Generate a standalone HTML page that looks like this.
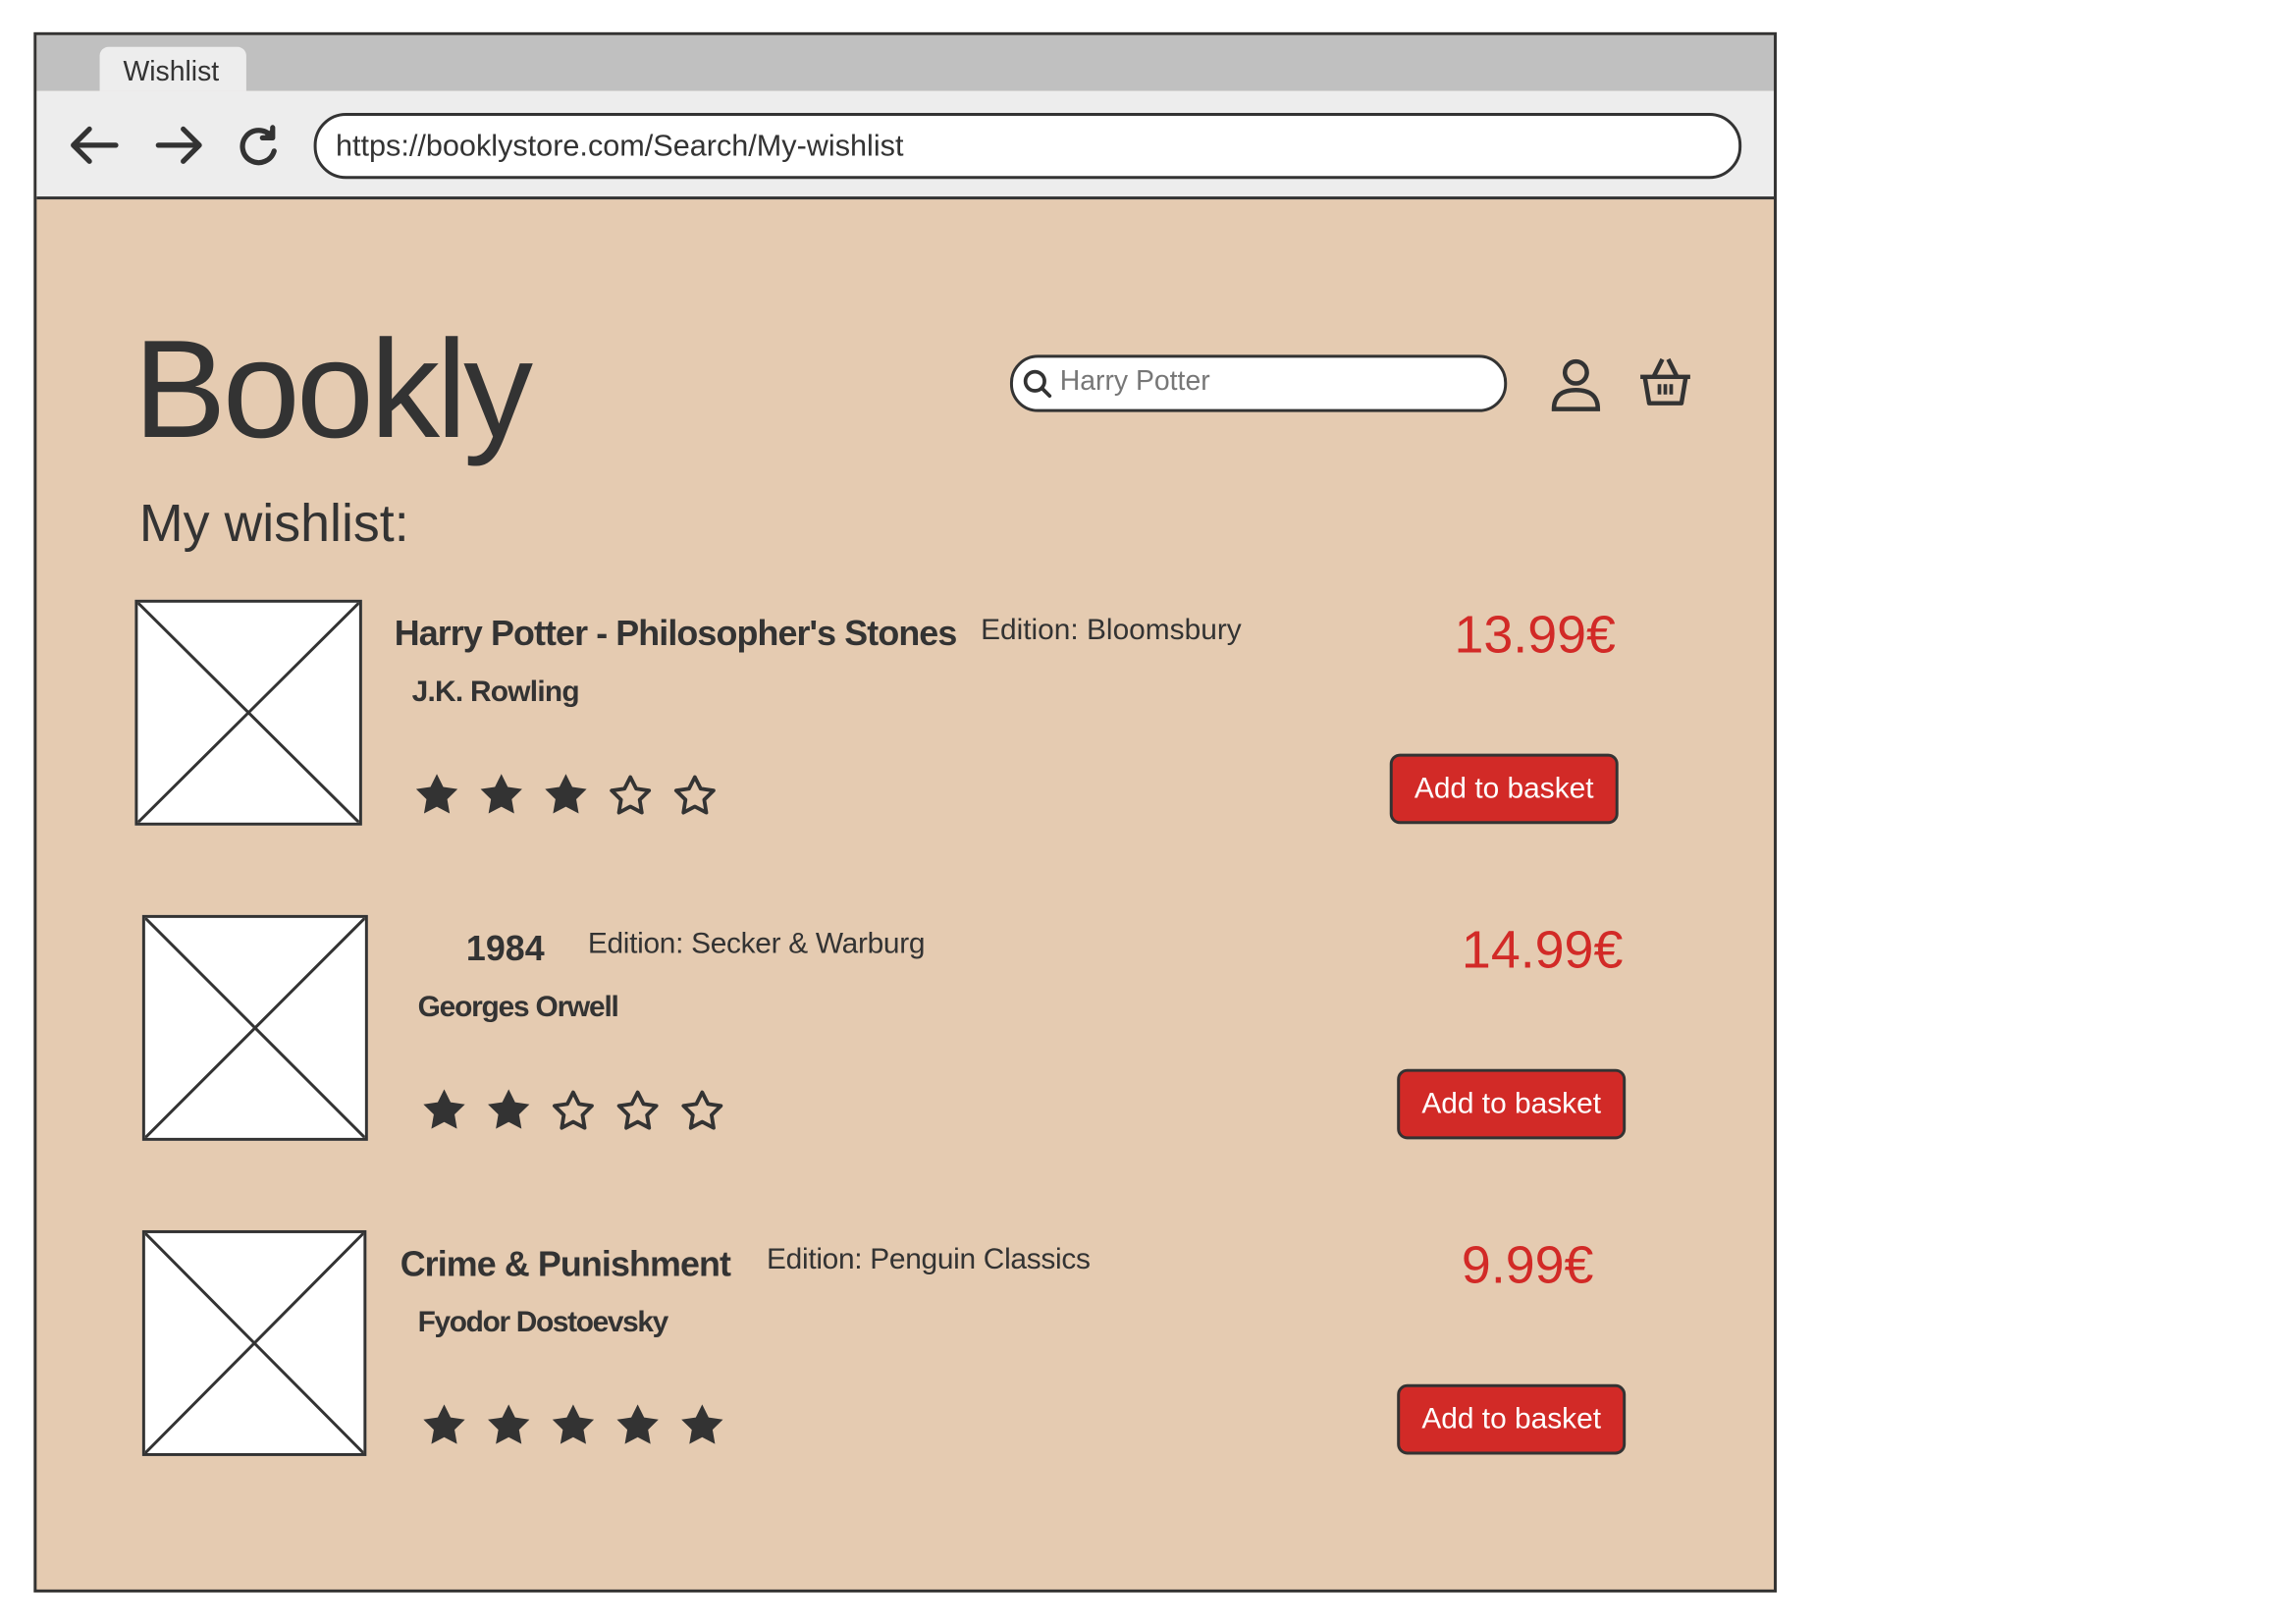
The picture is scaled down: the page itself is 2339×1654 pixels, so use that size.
<!DOCTYPE html>
<html><head><meta charset="utf-8"><style>
html,body{margin:0;padding:0;background:#fff;width:2339px;height:1654px;overflow:hidden}
#w{position:absolute;left:0;top:0;width:1560px;height:1103px;transform:scale(1.4934);transform-origin:0 0;font-family:"Liberation Sans",sans-serif;color:#333}
.a{position:absolute;white-space:nowrap;line-height:1}
.b{font-weight:bold}
.price{color:#d22a27;font-size:36px}
.btn{position:absolute;width:152px;height:44px;background:#d22a27;border:2px solid #333;border-radius:7px;color:#fff;font-size:20px;line-height:44px;text-align:center}
.img{position:absolute;background:#fff;border:2px solid #333;box-sizing:border-box}
.img svg{position:absolute;left:0;top:0;width:100%;height:100%}
.stars{position:absolute;display:flex;gap:10px}
.stars svg{width:34px;height:34px}
</style></head><body><div id="w">
<div style="position:absolute;left:23px;top:22px;width:1185px;height:1060px;border:2px solid #333;background:#e5cbb1"></div>
<div style="position:absolute;left:25px;top:24px;width:1185px;height:38px;background:#c0c0c0"></div>
<div style="position:absolute;left:68px;top:32px;width:100px;height:30px;background:#ededed;border-radius:6px 6px 0 0"></div>
<div class="a" style="left:84px;top:40px;font-size:19px">Wishlist</div>
<div style="position:absolute;left:25px;top:62px;width:1185px;height:72px;background:#ededed;border-bottom:2px solid #333"></div>
<svg style="position:absolute;left:45px;top:84px" width="150" height="32" viewBox="0 0 150 32" fill="none" stroke="#333" stroke-width="3.5" stroke-linecap="round" stroke-linejoin="round">
<path d="M5 15H34M16 4L5 15L16 26"/><path d="M63 15H91M80 4L91 15L80 26"/>
<path d="M140 9A11 11 0 1 0 142 19"/><path d="M141 3V10H134" fill="#333"/></svg>
<div style="position:absolute;left:214px;top:77px;width:970px;height:41px;background:#fff;border:2px solid #333;border-radius:22px"></div>
<div class="a" style="left:229px;top:90px;font-size:20.5px">https://booklystore.com/Search/My-wishlist</div>
<div class="a" style="left:91px;top:219px;font-size:95px;letter-spacing:-2.5px">Bookly</div>
<div style="position:absolute;left:689px;top:242px;width:335px;height:35px;background:#fff;border:2px solid #333;border-radius:19px"></div>
<svg style="position:absolute;left:697px;top:251px" width="22" height="22" viewBox="0 0 22 22" fill="none" stroke="#333" stroke-width="2.5"><circle cx="9" cy="9" r="6.5"/><path d="M14 14L19 19" stroke-linecap="round"/></svg>
<div class="a" style="left:723px;top:251px;font-size:19px;color:#777">Harry Potter</div>
<svg style="position:absolute;left:1056px;top:243px" width="38" height="40" viewBox="0 0 38 40" fill="none" stroke="#333" stroke-width="3"><circle cx="19" cy="11" r="7.5"/><path d="M4 36Q4 23 19 23Q34 23 34 36Z"/></svg>
<svg style="position:absolute;left:1116px;top:243px" width="40" height="36" viewBox="0 0 40 36" fill="none" stroke="#333" stroke-width="3" stroke-linejoin="round"><path d="M12 14L18 2M28 14L22 2"/><path d="M3 14H37"/><path d="M6 14L9 32H31L34 14"/><path d="M16 19V26M20 19V26M24 19V26" stroke-width="2.5"/></svg>
<div class="a" style="left:95px;top:339px;font-size:36px">My wishlist:</div>

<!-- item 1 -->
<div class="img" style="left:92px;top:409px;width:155px;height:154px"><svg viewBox="0 0 100 100" preserveAspectRatio="none"><path d="M0 0L100 100M100 0L0 100" stroke="#333" vector-effect="non-scaling-stroke" style="stroke-width:2px"/></svg></div>
<div class="a b" style="left:269px;top:421px;font-size:24px;letter-spacing:-0.6px">Harry Potter - Philosopher's Stones</div>
<div class="a" style="left:669px;top:420px;font-size:20px">Edition: Bloomsbury</div>
<div class="a b" style="left:281px;top:462px;font-size:20px;letter-spacing:-0.5px">J.K. Rowling</div>
<div class="a price" style="left:992px;top:415px">13.99€</div>
<div class="btn" style="left:948px;top:514px">Add to basket</div>
<div class="stars" style="left:281px;top:525px">
<svg viewBox="0 0 24 24"><path d="M12 2l3.09 6.26L22 9.27l-5 4.870 1.18 6.88L12 17.77l-6.18 3.25L7 14.14 2 9.27l6.91-1.01z" fill="#333"/></svg>
<svg viewBox="0 0 24 24"><path d="M12 2l3.09 6.26L22 9.27l-5 4.87 1.18 6.88L12 17.77l-6.18 3.25L7 14.14 2 9.27l6.91-1.01z" fill="#333"/></svg>
<svg viewBox="0 0 24 24"><path d="M12 2l3.09 6.26L22 9.27l-5 4.87 1.18 6.88L12 17.77l-6.18 3.25L7 14.14 2 9.27l6.91-1.01z" fill="#333"/></svg>
<svg viewBox="0 0 24 24"><path d="M12 3.5l2.8 5.6L21 10l-4.5 4.4 1 6.2L12 17.7l-5.5 2.9 1-6.2L3 10l6.2-.9z" fill="none" stroke="#333" stroke-width="1.8" stroke-linejoin="round"/></svg>
<svg viewBox="0 0 24 24"><path d="M12 3.5l2.8 5.6L21 10l-4.5 4.4 1 6.2L12 17.7l-5.5 2.9 1-6.2L3 10l6.2-.9z" fill="none" stroke="#333" stroke-width="1.8" stroke-linejoin="round"/></svg>
</div>

<!-- item 2 -->
<div class="img" style="left:97px;top:624px;width:154px;height:154px"><svg viewBox="0 0 100 100" preserveAspectRatio="none"><path d="M0 0L100 100M100 0L0 100" stroke="#333" vector-effect="non-scaling-stroke" style="stroke-width:2px"/></svg></div>
<div class="a b" style="left:318px;top:636px;font-size:24px">1984</div>
<div class="a" style="left:401px;top:634px;font-size:20px;letter-spacing:-0.2px">Edition: Secker &amp; Warburg</div>
<div class="a b" style="left:285px;top:677px;font-size:20px;letter-spacing:-0.8px">Georges Orwell</div>
<div class="a price" style="left:997px;top:630px">14.99€</div>
<div class="btn" style="left:953px;top:729px">Add to basket</div>
<div class="stars" style="left:286px;top:740px">
<svg viewBox="0 0 24 24"><path d="M12 2l3.09 6.26L22 9.27l-5 4.87 1.18 6.88L12 17.77l-6.18 3.25L7 14.14 2 9.27l6.91-1.01z" fill="#333"/></svg>
<svg viewBox="0 0 24 24"><path d="M12 2l3.09 6.26L22 9.27l-5 4.87 1.18 6.88L12 17.77l-6.18 3.25L7 14.14 2 9.27l6.91-1.01z" fill="#333"/></svg>
<svg viewBox="0 0 24 24"><path d="M12 3.5l2.8 5.6L21 10l-4.5 4.4 1 6.2L12 17.7l-5.5 2.9 1-6.2L3 10l6.2-.9z" fill="none" stroke="#333" stroke-width="1.8" stroke-linejoin="round"/></svg>
<svg viewBox="0 0 24 24"><path d="M12 3.5l2.8 5.6L21 10l-4.5 4.4 1 6.2L12 17.7l-5.5 2.9 1-6.2L3 10l6.2-.9z" fill="none" stroke="#333" stroke-width="1.8" stroke-linejoin="round"/></svg>
<svg viewBox="0 0 24 24"><path d="M12 3.5l2.8 5.6L21 10l-4.5 4.4 1 6.2L12 17.7l-5.5 2.9 1-6.2L3 10l6.2-.9z" fill="none" stroke="#333" stroke-width="1.8" stroke-linejoin="round"/></svg>
</div>

<!-- item 3 -->
<div class="img" style="left:97px;top:839px;width:153px;height:154px"><svg viewBox="0 0 100 100" preserveAspectRatio="none"><path d="M0 0L100 100M100 0L0 100" stroke="#333" vector-effect="non-scaling-stroke" style="stroke-width:2px"/></svg></div>
<div class="a b" style="left:273px;top:851px;font-size:24px;letter-spacing:-0.6px">Crime &amp; Punishment</div>
<div class="a" style="left:523px;top:849px;font-size:20px;letter-spacing:-0.2px">Edition: Penguin Classics</div>
<div class="a b" style="left:285px;top:892px;font-size:20px;letter-spacing:-0.9px">Fyodor Dostoevsky</div>
<div class="a price" style="left:997px;top:845px">9.99€</div>
<div class="btn" style="left:953px;top:944px">Add to basket</div>
<div class="stars" style="left:286px;top:955px">
<svg viewBox="0 0 24 24"><path d="M12 2l3.09 6.26L22 9.27l-5 4.87 1.18 6.88L12 17.77l-6.18 3.25L7 14.14 2 9.27l6.91-1.01z" fill="#333"/></svg>
<svg viewBox="0 0 24 24"><path d="M12 2l3.09 6.26L22 9.27l-5 4.87 1.18 6.88L12 17.77l-6.18 3.25L7 14.14 2 9.27l6.91-1.01z" fill="#333"/></svg>
<svg viewBox="0 0 24 24"><path d="M12 2l3.09 6.26L22 9.27l-5 4.87 1.18 6.88L12 17.77l-6.18 3.25L7 14.14 2 9.27l6.91-1.01z" fill="#333"/></svg>
<svg viewBox="0 0 24 24"><path d="M12 2l3.09 6.26L22 9.27l-5 4.87 1.18 6.88L12 17.77l-6.18 3.25L7 14.14 2 9.27l6.91-1.01z" fill="#333"/></svg>
<svg viewBox="0 0 24 24"><path d="M12 2l3.09 6.26L22 9.27l-5 4.87 1.18 6.88L12 17.77l-6.18 3.25L7 14.14 2 9.27l6.91-1.01z" fill="#333"/></svg>
</div>
</div></body></html>
